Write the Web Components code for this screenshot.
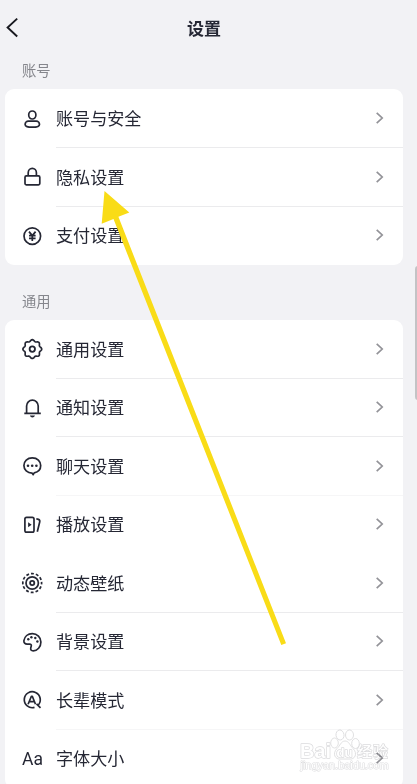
<!DOCTYPE html>
<html lang="zh-CN">
<head>
<meta charset="utf-8">
<title>设置</title>
<style>
html,body{margin:0;height:784px;overflow:hidden;background:#f2f2f5}
body{font-family:"Noto Sans CJK SC","Noto Sans",sans-serif;color:#252734}
</style>
</head>
<body>
<settings-page></settings-page>
<script>
// Scalloped outline with eight lobes for the gear icon.
const gearOutline = 'M' + Array.from({length:96}, (_, i) => {
  const a = i * Math.PI / 48, r = 8.6 + .8 * Math.cos(8 * a);
  return (12.3 + r * Math.cos(a)).toFixed(2) + ' ' + (12.1 + r * Math.sin(a)).toFixed(2);
}).join('L') + 'z';
const icons = {
 user:'<ellipse cx="12.3" cy="8" rx="3.6" ry="4"/><path d="M8.3 14.2h8c1.7 0 3.2 1.5 3.2 3.2 0 2.2-2.5 2.8-7.2 2.8s-7.2-.6-7.2-2.8c0-1.7 1.500-3.200 3.200-3.200z"/>',
 lock:'<rect x="5" y="10.900" width="14.800" height="9" rx="1.300"/><path d="M8.200 10.700V7.700a4.100 4.300 0 0 1 8.200 0v3"/>',
 yen:'<circle cx="12.300" cy="12.100" r="8.300"/><path d="M9 7.600l3.300 4 3.300-4M12.300 11.600v5.300M9 11.600h6.600M9 14.300h6.600"/>',
 gear:'<path d="' + gearOutline + '"/><circle cx="12.300" cy="12.100" r="2.700" stroke-width="1.800"/>',
 bell:'<path d="M4.300 17.400h16.500M6.600 17.400v-7.400a5.800 5.900 0 0 1 11.600 0V17.400"/><path d="M9.800 19.400h5.200q-.7 2-2.600 2T9.800 19.400z" fill="currentColor" stroke="none"/>',
 chat:'<path d="M12.300 3.900c-5 0-8.400 3.300-8.400 7.700 0 4.200 3.500 7.500 8.100 7.500l1.200 1.600 1-1.800c4-.8 6.500-3.700 6.500-7.300 0-4.400-3.400-7.700-8.400-7.700z"/><g fill="currentColor" stroke="none"><circle cx="8" cy="11.700" r="1.300"/><circle cx="12.200" cy="11.700" r="1.300"/><circle cx="16.400" cy="11.700" r="1.300"/></g>',
 play:'<rect x="4.900" y="4.400" width="9.100" height="14.800" rx="1.700"/><path d="M8.100 9.300l3.500 2.500-3.500 2.500z" fill="currentColor" stroke="none"/><path d="M16.300 5.700l2.100.7q1.800.7 1.300 2.600l-2.400 9.700"/>',
 live:'<circle cx="12.200" cy="12" r="9.400" stroke-dasharray="2.900 2.022" stroke-dashoffset="1.500"/><circle cx="12.200" cy="12" r="6.200"/><circle cx="12.200" cy="12" r="2.100" stroke-width="1.800"/>',
 palette:'<path d="M3.900 10.600c.6-4.100 4-7 8.400-7 4.900 0 8.600 3.700 8.600 8.300 0 5-3.500 8.900-7.600 8.900-2.200 0-3-1.200-2.500-3l.5-1.900c.3-1.200-.5-1.700-1.600-1.700H7.200c-2.200 0-3.600-1.500-3.300-3.600z"/><g fill="currentColor" stroke="none"><circle cx="8.300" cy="9.300" r="1.200"/><circle cx="11.400" cy="7.200" r="1.200"/><circle cx="15.300" cy="8" r="1.200"/><circle cx="17.400" cy="11.500" r="1.200"/></g>',
 elder:'<path d="M18 17.300a8 8 0 1 0-3.500 2.100M16.500 15.900l4 4"/><path d="M8.100 16.300l3.300-8h.9l3.200 8M9.400 13.600h4.900"/>'
};
const define = (name, render) => customElements.define(name, class extends HTMLElement {
  connectedCallback(){
    if(!this.shadowRoot) this.attachShadow({mode:'open'}).innerHTML = render(this);
  }
});
define('setting-icon', el => `<style>
:host{display:block;width:24px;height:24px;flex:none}
svg{display:block;overflow:visible}
span{display:block;font:17.500px/24px Roboto,"Liberation Sans",sans-serif;margin-left:2px;white-space:nowrap}
</style>` + (el.getAttribute('name') === 'font' ? '<span>Aa</span>' :
`<svg width="24" height="24" viewBox="0 0 24 24" fill="none" stroke="currentColor" stroke-width="1.700" stroke-linejoin="round">${icons[el.getAttribute('name')]}</svg>`));
define('nav-header', () => `<style>
:host{display:grid;grid-template-columns:50px 1fr 50px;align-items:center;height:56px;padding-right:9px}
svg{display:block}
h1{margin:0;font-size:17px;font-weight:700;line-height:24px;text-align:center}
</style>
<svg width="24" height="24" viewBox="0 0 24 24" fill="none" stroke="#18191f" stroke-width="1.900"><path d="M17.200 2.600L7.600 11.500l9.600 9"/></svg><h1><slot></slot></h1>`);
define('setting-row', el => `<style>
:host{display:flex;height:58.500px;box-sizing:border-box;padding-left:15px}
.body{display:flex;flex:1;align-items:center;margin-left:12px;box-sizing:border-box;border-bottom:1px solid var(--line,#ebebed);padding-right:18px}
:host([last]) .body{border-color:transparent}
.label{flex:1;font-size:17.100px;line-height:24px}
setting-icon{align-self:center}
svg{display:block}
</style>
<setting-icon name="${el.getAttribute('icon')}"></setting-icon>
<div class="body"><span class="label"><slot></slot></span>
<svg width="10" height="14" viewBox="0 0 10 14" fill="none" stroke="#939398" stroke-width="1.700"><path d="M1.700 1.900L7.200 7l-5.500 5.100"/></svg></div>`);
define('setting-group', el => `<style>
:host{display:block}
h2{margin:0;height:33px;box-sizing:border-box;padding:4px 0 0 22px;font-size:14.300px;font-weight:400;line-height:20px;color:#85868c}
:host([spaced]) h2{height:55px;padding-top:26px}
.card{height:var(--card,auto);box-sizing:border-box;padding-top:var(--inset,.600px);margin:0 14px 0 5px;background:#fff;border-radius:9px;overflow:hidden}
</style><h2>${el.getAttribute('heading')}</h2><div class="card"><slot></slot></div>`);
define('arrow-mark', () => `<style>:host{position:absolute;inset:0;pointer-events:none}svg{display:block}</style>
<svg width="417" height="784" fill="#f9dc17"><path d="M104.500 191l24.800 21.500-10.900 4.300L286 643.200l-4.700 1.900L113.500 218.900l-11.800 4.800z"/></svg>`);
define('scroll-thumb', () => `<style>:host{position:absolute;left:415px;top:266px;width:8px;height:134px;border-radius:3px;background:#c3c3c5}</style>`);
define('corner-watermark', () => `<style>
:host{position:absolute;left:297px;top:726px;mix-blend-mode:multiply}svg{display:block}
text{font-family:"Liberation Sans","Noto Sans CJK SC",sans-serif;font-weight:700;paint-order:stroke}
</style><svg width="100" height="50" fill="#fff" stroke="#dcdcde" stroke-width="1.500" stroke-linejoin="round">
<g stroke-width=".9"><ellipse cx="37.500" cy="17" rx="3.800" ry="5"/><ellipse cx="43" cy="9" rx="4" ry="5" transform="rotate(-8 43 9)"/><ellipse cx="52.500" cy="9" rx="4" ry="5"/><ellipse cx="58.500" cy="17.500" rx="3.800" ry="5"/><path d="M48 15c-4 0-5 5-8 7.500-5 5-2 11.500 4 10.500h8c6 1 9-5.500 4-10.500-3-3-4-7.500-8-7.500z"/></g>
<text x="3" y="31.500" font-size="20.500" textLength="31" lengthAdjust="spacingAndGlyphs">Bai</text><text x="39.500" y="30.500" font-size="13" textLength="16">du</text>
<text x="60" y="31" font-size="15" textLength="31" style="font-family:'Noto Sans CJK SC';font-weight:500">经验</text>
<text x="3.500" y="43" font-size="10" textLength="88" lengthAdjust="spacingAndGlyphs" stroke-width="1" style="font-weight:400">jingyan.baidu.com</text></svg>`);
define('settings-page', () => `<style>
:host{display:block;position:relative;width:417px;height:784px;overflow:hidden;background:#f2f2f5}
</style>
<nav-header>设置</nav-header>
<setting-group heading="账号" style="--card:176px">
<setting-row icon="user">账号与安全</setting-row>
<setting-row icon="lock">隐私设置</setting-row>
<setting-row icon="yen" last>支付设置</setting-row>
</setting-group>
<setting-group heading="通用" style="--inset:.2px" spaced>
<setting-row icon="gear">通用设置</setting-row>
<setting-row icon="bell">通知设置</setting-row>
<setting-row icon="chat" style="--line:#f6f6f7">聊天设置</setting-row>
<setting-row icon="play" last>播放设置</setting-row>
<setting-row icon="live">动态壁纸</setting-row>
<setting-row icon="palette">背景设置</setting-row>
<setting-row icon="elder" style="--line:#f6f6f7">长辈模式</setting-row>
<setting-row icon="font" last>字体大小</setting-row>
</setting-group>
<corner-watermark></corner-watermark>
<scroll-thumb></scroll-thumb>
<arrow-mark></arrow-mark>`);
</script>
</body>
</html>
